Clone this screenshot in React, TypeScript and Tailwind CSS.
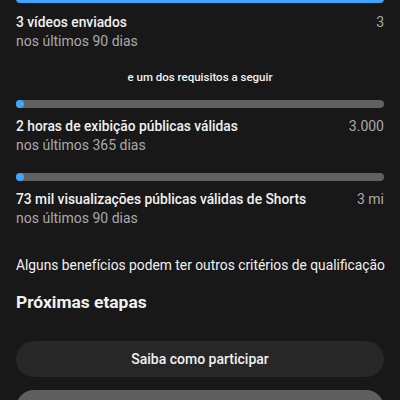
const requirements = [
  {
    title: "2 horas de exibição públicas válidas",
    value: "3.000",
    period: "nos últimos 365 dias",
  },
  {
    title: "73 mil visualizações públicas válidas de Shorts",
    value: "3 mi",
    period: "nos últimos 90 dias",
  },
];

function Progress({ className = "" }: { className?: string }) {
  return (
    <div className={`relative h-2 rounded-full bg-[#606060] ${className}`}>
      <div className="absolute left-0 top-0 h-2 w-2 rounded-full bg-[#3ea6ff]" />
    </div>
  );
}

function Row({ title, value, period }: { title: string; value: string; period: string }) {
  return (
    <div>
      <div className="flex items-center justify-between leading-[20px]">
        <span className="text-[13.8px] font-medium text-[#f1f1f1]">{title}</span>
        <span className="text-[14px] text-[#aaaaaa]">{value}</span>
      </div>
      <p className="text-[14px] leading-[19px] text-[#aaaaaa]">{period}</p>
    </div>
  );
}

export default function App() {
  return (
    <div
      className="h-[400px] w-[400px] overflow-hidden bg-[#181818] px-4"
      style={{ fontFamily: "Roboto, 'Noto Sans', sans-serif" }}
    >
      <div className="-mt-[5px] h-2 rounded-full bg-[#3ea6ff]" />

      <div className="mt-[9px]">
        <Row title="3 vídeos enviados" value="3" period="nos últimos 90 dias" />
      </div>

      <p className="mt-[18px] text-center text-[11.5px] font-medium leading-[16px] text-[#f1f1f1]">
        e um dos requisitos a seguir
      </p>

      <Progress className="mt-[15px]" />
      <div className="mt-2">
        <Row {...requirements[0]} />
      </div>

      <Progress className="mt-[18px]" />
      <div className="mt-2">
        <Row {...requirements[1]} />
      </div>

      <p className="mt-[27px] whitespace-nowrap text-[13.8px] leading-[20px] text-[#f1f1f1]">
        Alguns benefícios podem ter outros critérios de qualificação
      </p>

      <h2 className="mt-[15px] text-[17.4px] font-bold leading-[24px] text-[#f1f1f1]">
        Próximas etapas
      </h2>

      <button className="mt-[27px] flex h-9 w-full items-center justify-center rounded-full bg-[#272727] text-[14px] font-medium text-[#f1f1f1]">
        Saiba como participar
      </button>
      <button className="mt-[13px] flex h-9 w-full items-center justify-center rounded-full bg-[#5f5f5f] text-[14px] font-medium text-[#f1f1f1]" />
    </div>
  );
}
